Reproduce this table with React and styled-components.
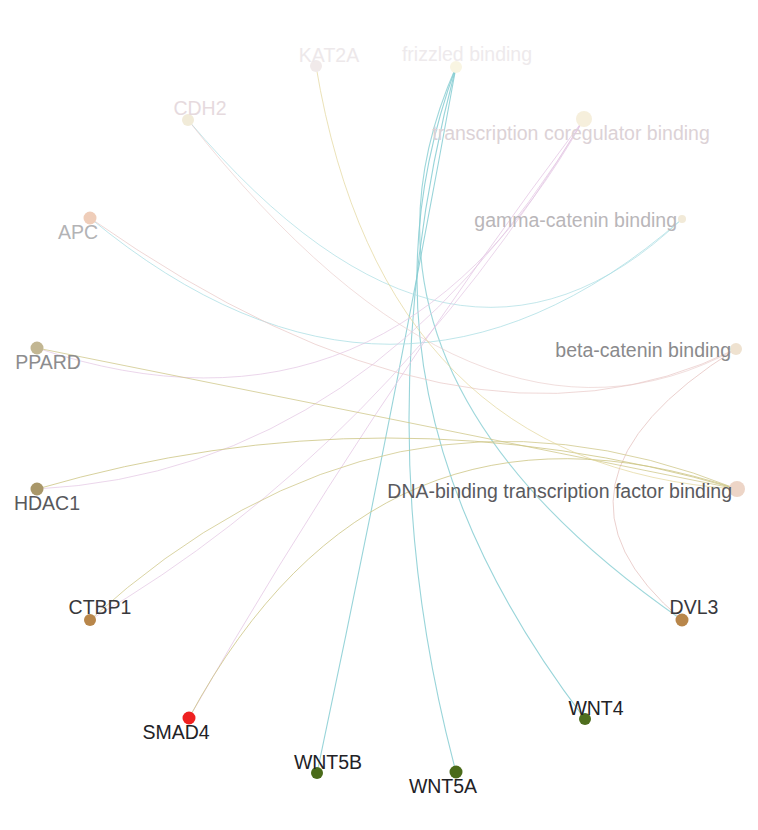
import styled, { createGlobalStyle } from "styled-components";

const GlobalStyle = createGlobalStyle`
  html, body {
    margin: 0;
    padding: 0;
    background: #ffffff;
  }
`;

const Page = styled.div`
  width: 758px;
  height: 830px;
  background: #ffffff;
  overflow: hidden;
`;

const Graph = styled.svg`
  display: block;
  width: 758px;
  height: 830px;
`;

const Edge = styled.path`
  fill: none;
  stroke: ${(p) => p.$color};
  stroke-opacity: ${(p) => p.$alpha};
  stroke-width: ${(p) => p.$width || 1};
`;

const Dot = styled.circle`
  fill: ${(p) => p.$fill};
`;

const Label = styled.text`
  font-family: "Liberation Sans", Arial, sans-serif;
  font-size: 19.5px;
  fill: ${(p) => p.$tone};
`;

const nodes = {
  KAT2A: { x: 316, y: 66, r: 6, fill: "#f1eaea" },
  frizzled: { x: 456, y: 67, r: 6, fill: "#f9f5e2" },
  CDH2: { x: 188, y: 120, r: 6, fill: "#f1ebd8" },
  tcb: { x: 584, y: 119, r: 8, fill: "#f6efdc" },
  APC: { x: 90, y: 218, r: 6.5, fill: "#efcdb9" },
  gamma: { x: 682, y: 219, r: 4, fill: "#f2ead8" },
  PPARD: { x: 37, y: 348, r: 6.5, fill: "#c2b692" },
  beta: { x: 736, y: 349, r: 6, fill: "#efe2d0" },
  HDAC1: { x: 37, y: 489, r: 6.5, fill: "#a99769" },
  dna: { x: 737, y: 489, r: 8, fill: "#edd5c7" },
  CTBP1: { x: 90, y: 620, r: 6, fill: "#b8864a" },
  DVL3: { x: 682, y: 620, r: 6.5, fill: "#b8864a" },
  SMAD4: { x: 189, y: 718, r: 6.5, fill: "#ee2020" },
  WNT5B: { x: 317, y: 773, r: 6, fill: "#4a6b1a" },
  WNT4: { x: 585, y: 719, r: 6, fill: "#4f6e1e" },
  WNT5A: { x: 456, y: 772, r: 6.5, fill: "#4a6b1a" },
};

const labels = [
  { text: "KAT2A", x: 329, y: 62, anchor: "middle", tone: "#ede8ea" },
  { text: "frizzled binding", x: 467, y: 61, anchor: "middle", tone: "#eeeaec" },
  { text: "CDH2", x: 200, y: 115, anchor: "middle", tone: "#e6dade" },
  { text: "transcription coregulator binding", x: 571, y: 140, anchor: "middle", tone: "#dcd2d6" },
  { text: "APC", x: 78, y: 239, anchor: "middle", tone: "#b3b3b5" },
  { text: "gamma-catenin binding", x: 677, y: 227, anchor: "end", tone: "#b9b6b9" },
  { text: "PPARD", x: 48, y: 369, anchor: "middle", tone: "#8c8c8e" },
  { text: "beta-catenin binding", x: 731, y: 357, anchor: "end", tone: "#8a8a8c" },
  { text: "HDAC1", x: 47, y: 510, anchor: "middle", tone: "#58585c" },
  { text: "DNA-binding transcription factor binding", x: 732, y: 498, anchor: "end", tone: "#5a5a5e" },
  { text: "CTBP1", x: 100, y: 614, anchor: "middle", tone: "#38383c" },
  { text: "DVL3", x: 694, y: 614, anchor: "middle", tone: "#38383c" },
  { text: "SMAD4", x: 176, y: 739, anchor: "middle", tone: "#222226" },
  { text: "WNT5B", x: 328, y: 769, anchor: "middle", tone: "#222226" },
  { text: "WNT4", x: 596, y: 715, anchor: "middle", tone: "#222226" },
  { text: "WNT5A", x: 443, y: 793, anchor: "middle", tone: "#222226" },
];

const teal = "#86cdd2";
const paleTeal = "#a9dde3";
const olive = "#cdc585";
const violet = "#e3c4e3";
const peach = "#e8c8c6";

// [from, to, control x, control y, colour, opacity, width]
const edges = [
  ["frizzled", "WNT5B", 392, 420, teal, 0.85, 1.1],
  ["frizzled", "WNT5A", 362, 420, teal, 0.85, 1.1],
  ["frizzled", "WNT4", 336, 393, teal, 0.85, 1.1],
  ["frizzled", "DVL3", 322, 370, teal, 0.8, 1.1],
  ["CDH2", "gamma", 455, 436, paleTeal, 0.7],
  ["APC", "gamma", 394, 470, paleTeal, 0.75],
  ["APC", "beta", 467, 482, peach, 0.7],
  ["CDH2", "beta", 478, 489, peach, 0.6],
  ["beta", "DVL3", 521, 484, peach, 0.85],
  ["PPARD", "tcb", 389, 466, violet, 0.7],
  ["HDAC1", "tcb", 370, 472, violet, 0.7],
  ["CTBP1", "tcb", 383, 450, violet, 0.7],
  ["SMAD4", "tcb", 365, 410, violet, 0.75],
  ["PPARD", "dna", 387, 418, olive, 0.75],
  ["HDAC1", "dna", 387, 387, olive, 0.8],
  ["CTBP1", "dna", 387, 349, olive, 0.75],
  ["SMAD4", "dna", 377, 370, olive, 0.8],
  ["KAT2A", "dna", 383, 466, "#e2d69a", 0.7],
];

function arcPath(a, b, cx, cy) {
  return `M ${a.x} ${a.y} Q ${cx} ${cy} ${b.x} ${b.y}`;
}

export default function App() {
  return (
    <>
      <GlobalStyle />
      <Page>
        <Graph viewBox="0 0 758 830">
          {edges.map(([from, to, cx, cy, color, alpha, width]) => (
            <Edge
              key={from + to}
              d={arcPath(nodes[from], nodes[to], cx, cy)}
              $color={color}
              $alpha={alpha}
              $width={width}
            />
          ))}

          {Object.entries(nodes).map(([id, n]) => (
            <Dot key={id} cx={n.x} cy={n.y} r={n.r} $fill={n.fill} />
          ))}

          {labels.map((l) => (
            <Label
              key={l.text}
              x={l.x}
              y={l.y}
              textAnchor={l.anchor}
              $tone={l.tone}
            >
              {l.text}
            </Label>
          ))}
        </Graph>
      </Page>
    </>
  );
}
